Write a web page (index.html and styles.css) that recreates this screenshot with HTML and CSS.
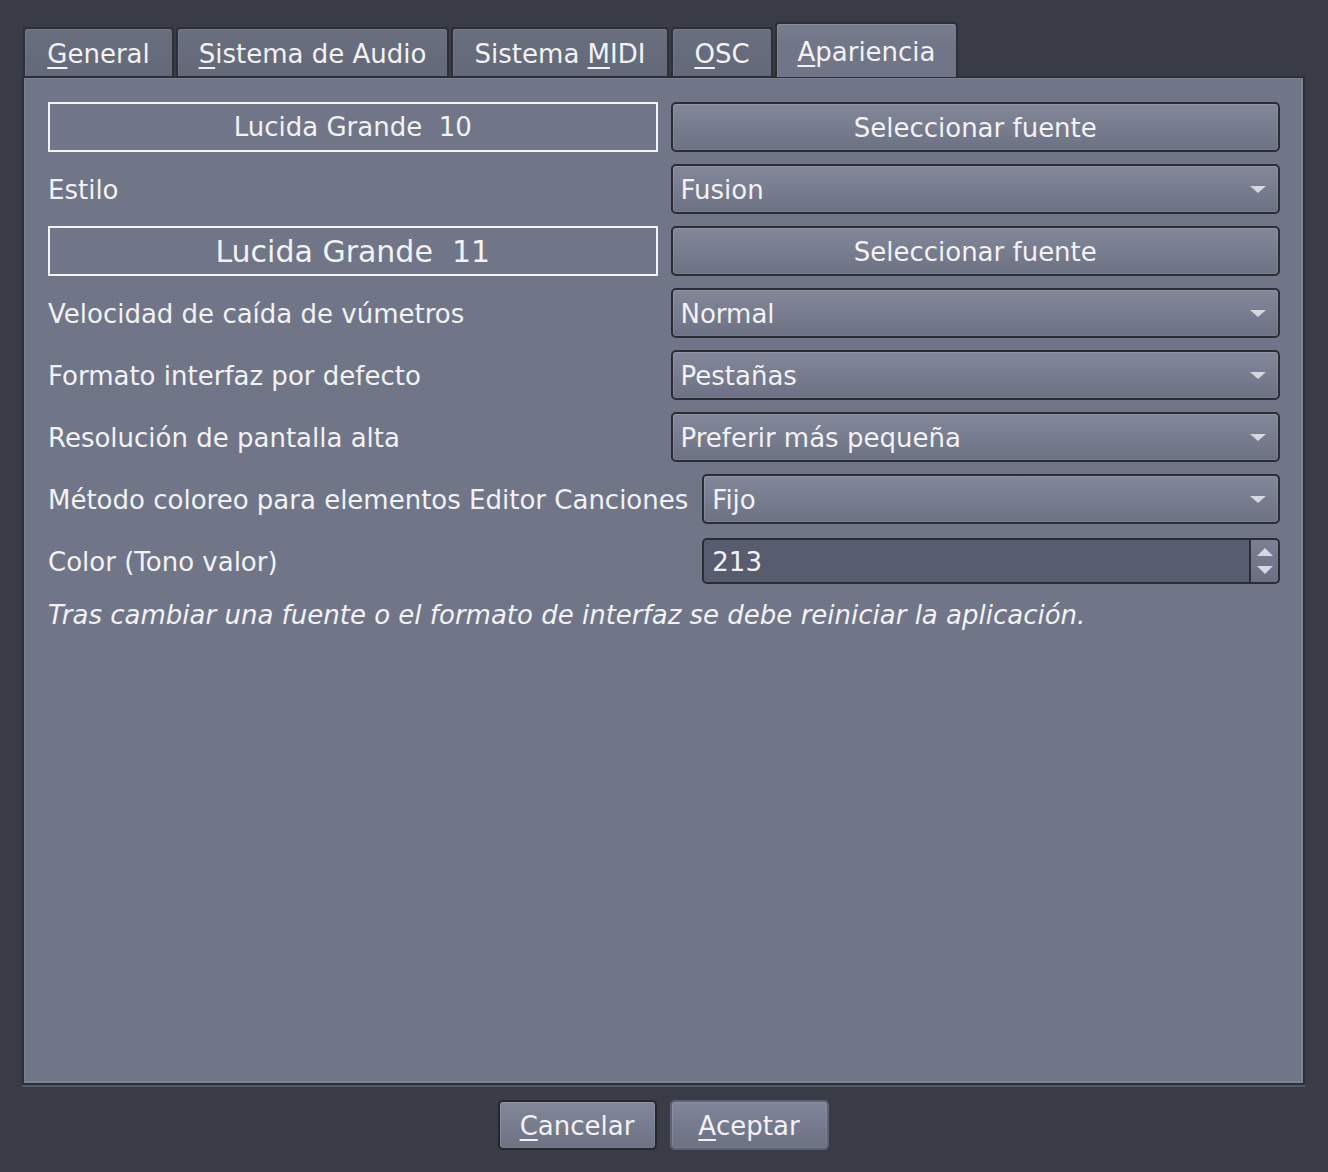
FILE: index.html
```html
<!DOCTYPE html>
<html lang="es">
<head>
<meta charset="utf-8">
<title>Preferencias</title>
<link rel="stylesheet" href="styles.css">
</head>
<body>
<div class="dialog">
  <div class="tabbar">
    <div class="tab t-general"><u>G</u>eneral</div>
    <div class="tab t-audio"><u>S</u>istema de Audio</div>
    <div class="tab t-midi">Sistema <u>M</u>IDI</div>
    <div class="tab t-osc"><u>O</u>SC</div>
    <div class="tab t-apar active"><u>A</u>pariencia</div>
  </div>
  <div class="panel">
    <div class="grid-a">
      <div class="fontbox">Lucida Grande&nbsp; 10</div>
      <div class="btn">Seleccionar fuente</div>
      <div class="label">Estilo</div>
      <div class="combo">Fusion<span class="arrow"></span></div>
      <div class="fontbox big">Lucida Grande&nbsp; 11</div>
      <div class="btn">Seleccionar fuente</div>
      <div class="label">Velocidad de caída de vúmetros</div>
      <div class="combo">Normal<span class="arrow"></span></div>
      <div class="label">Formato interfaz por defecto</div>
      <div class="combo">Pestañas<span class="arrow"></span></div>
      <div class="label">Resolución de pantalla alta</div>
      <div class="combo">Preferir más pequeña<span class="arrow"></span></div>
    </div>
    <div class="grid-b">
      <div class="label">Método coloreo para elementos Editor Canciones</div>
      <div class="combo">Fijo<span class="arrow"></span></div>
      <div class="label">Color (Tono valor)</div>
      <div class="cell">
        <div class="spin">
          <span class="spin-value">213</span>
          <span class="spin-btns"><span class="up"></span><span class="down"></span></span>
        </div>
      </div>
    </div>
    <p class="note">Tras cambiar una fuente o el formato de interfaz se debe reiniciar la aplicación.</p>
  </div>
  <div class="footer">
    <div class="btn small focus"><u>C</u>ancelar</div>
    <div class="btn small def"><u>A</u>ceptar</div>
  </div>
</div>
</body>
</html>
```

FILE: styles.css
```css
* { box-sizing: border-box; }
html, body {
  margin: 0;
  padding: 0;
  background: #393c47;
  width: 1328px;
  height: 1172px;
  overflow: hidden;
}
body {
  font-family: "DejaVu Sans", "Liberation Sans", sans-serif;
  font-size: 26px;
  color: #f2f2f4;
}
u {
  text-decoration: underline;
  text-decoration-thickness: 2px;
  text-underline-offset: 4px;
}
.dialog {
  padding: 23px 23px 0 22px;
  display: flex;
  flex-direction: column;
}
.tabbar {
  display: flex;
  align-items: flex-end;
  height: 53px;
  padding-left: 1px;
  gap: 2px;
  position: relative;
  z-index: 2;
}
.tab {
  height: 49px;
  padding-top: 8px;
  text-align: center;
  background: linear-gradient(#6a6f80, #646979);
  border: 2px solid #2c2f38;
  border-bottom: none;
  border-radius: 4px 4px 0 0;
  line-height: 34px;
  white-space: nowrap;
  box-shadow: inset 1px 1px 0 rgba(255,255,255,0.08);
}
.t-general { width: 151px; }
.t-audio { width: 273px; }
.t-midi { width: 218px; }
.t-osc { width: 102px; }
.t-apar { width: 183px; }
.tab.active {
  height: 55px;
  margin-bottom: -1px;
  padding-top: 11px;
  background: linear-gradient(#787e90, #707688 40%);
  border-color: #2c2f38;
  box-shadow: inset 1px 1px 0 rgba(255,255,255,0.12);
}
.panel {
  height: 1009px;
  background: #707688;
  border: 2px solid #2c2f38;
  box-shadow: inset 1px 1px 0 #7b8193, inset -2px -2px 0 #7d8396, 0 2px 0 #555a68;
  padding: 24px 23px 0 24px;
  position: relative;
  z-index: 1;
}
.grid-a {
  display: grid;
  grid-template-columns: 1fr 1fr;
  grid-auto-rows: 50px;
  column-gap: 13px;
  row-gap: 12px;
}
.grid-b {
  margin-top: 12px;
  display: grid;
  grid-template-columns: auto 1fr;
  grid-auto-rows: 50px;
  column-gap: 14px;
  row-gap: 12px;
}
.label {
  display: flex;
  align-items: center;
  padding-top: 2px;
  white-space: nowrap;
}
.fontbox {
  border: 2px solid #f4f4f6;
  display: flex;
  align-items: center;
  justify-content: center;
  white-space: nowrap;
}
.fontbox.big { font-size: 30px; }
.btn, .combo {
  border: 2px solid #2a2d35;
  border-radius: 5px;
  background: linear-gradient(#83879a, #6c7183);
  box-shadow: inset 1px 1px 0 rgba(255,255,255,0.12), inset -1px -1px 0 rgba(255,255,255,0.08);
  display: flex;
  align-items: center;
  padding-top: 1px;
  white-space: nowrap;
}
.btn { justify-content: center; }
.combo {
  padding-left: 8px;
  position: relative;
}
.arrow {
  position: absolute;
  right: 12px;
  top: 20px;
  width: 0;
  height: 0;
  border-left: 8px solid transparent;
  border-right: 8px solid transparent;
  border-top: 7px solid #d6d8df;
}
.cell {
  display: flex;
  align-items: center;
}
.spin {
  width: 100%;
  height: 46px;
  border: 2px solid #2a2d35;
  border-radius: 5px;
  background: #575c6f;
  display: flex;
  align-items: stretch;
  overflow: hidden;
}
.spin-value {
  flex: 1;
  padding-left: 8px;
  padding-top: 1px;
  display: flex;
  align-items: center;
}
.spin-btns {
  width: 29px;
  border-left: 2px solid #2a2d35;
  background: linear-gradient(#7b8092, #6a6f81);
  display: flex;
  flex-direction: column;
  align-items: center;
  justify-content: center;
  gap: 10px;
}
.up {
  width: 0; height: 0;
  border-left: 8px solid transparent;
  border-right: 8px solid transparent;
  border-bottom: 8px solid #d6d8df;
}
.down {
  width: 0; height: 0;
  border-left: 8px solid transparent;
  border-right: 8px solid transparent;
  border-top: 8px solid #d6d8df;
}
.note {
  margin: 14px 0 0 0;
  font-style: italic;
  line-height: 30px;
  white-space: nowrap;
}
.footer {
  display: flex;
  justify-content: center;
  gap: 13px;
  margin-top: 15px;
  padding-right: 1px;
}
.btn.small {
  width: 159px;
  height: 50px;
}
.btn.focus { border-color: #25272e; }
.btn.def {
  border-color: #5d6274;
  background: linear-gradient(#80859a, #6b7082);
}
```
